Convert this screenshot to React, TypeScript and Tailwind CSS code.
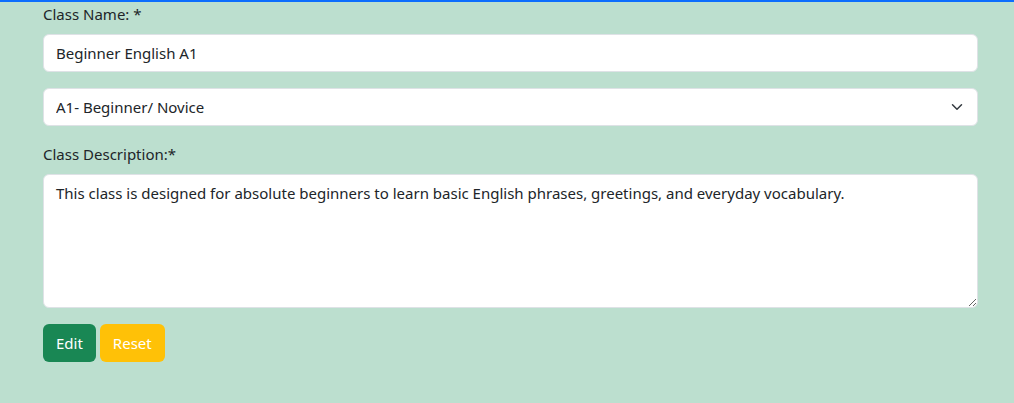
export default function App() {
  return (
    <div className="min-h-[403px] w-full bg-[#bcdfcf] border-t-2 border-[#0d6efd] font-['Noto_Sans',sans-serif] text-[15px] text-[#212529]">
      <form className="w-[935px] ml-[43px] flex flex-col">
        <label className="leading-6 mb-2">Class Name: *</label>
        <input
          type="text"
          defaultValue="Beginner English A1"
          className="h-[38px] w-full rounded-md border border-[#dee2e6] bg-white px-3 leading-6 outline-none"
        />
        <div className="relative mt-4">
          <select
            defaultValue="A1"
            className="h-[38px] w-full appearance-none rounded-md border border-[#dee2e6] bg-white pl-3 pr-9 leading-6 outline-none"
          >
            <option value="A1">A1- Beginner/ Novice</option>
          </select>
          <svg
            className="pointer-events-none absolute right-[14px] top-[13px]"
            width="14"
            height="12"
            viewBox="0 0 16 16"
          >
            <path d="m2 5 6 6 6-6" fill="none" stroke="#343a40" strokeWidth="2" strokeLinecap="round" strokeLinejoin="round" />
          </svg>
        </div>
        <label className="leading-6 mt-4 mb-2">Class Description:*</label>
        <textarea
          rows={5}
          defaultValue="This class is designed for absolute beginners to learn basic English phrases, greetings, and everyday vocabulary."
          className="h-[134px] w-full rounded-md border border-[#dee2e6] bg-white px-3 py-1.5 leading-6 outline-none"
        />
        <div className="mt-4 flex gap-1">
          <button type="button" className="h-[38px] rounded-md bg-[#198754] px-[13px] text-white">
            Edit
          </button>
          <button type="button" className="h-[38px] rounded-md bg-[#ffc107] px-[13px] text-white">
            Reset
          </button>
        </div>
      </form>
    </div>
  );
}
